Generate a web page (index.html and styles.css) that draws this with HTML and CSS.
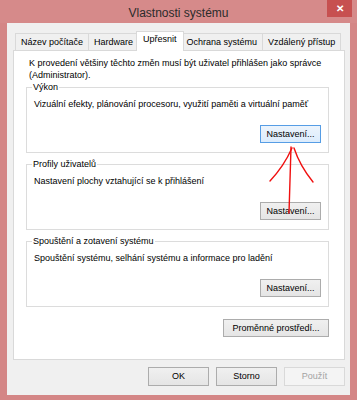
FILE: index.html
```html
<!DOCTYPE html>
<html lang="cs">
<head>
    <meta charset="UTF-8">
    <meta name="viewport" content="width=device-width, initial-scale=1.0">
    <title>Vlastnosti systému</title>
    <link rel="stylesheet" href="styles.css">
</head>
<body>
    <div class="window">
        <div class="titlebar">
            <span></span>
            <span class="title">Vlastnosti systému</span>
            <button class="close">&#x2715;</button>
        </div>

        <div class="client">
            <div class="tabs">
                <div class="tab">Název počítače</div>
                <div class="tab">Hardware</div>
                <div class="tab active">Upřesnit</div>
                <div class="tab">Ochrana systému</div>
                <div class="tab">Vzdálený přístup</div>
            </div>

            <div class="panel">
                <p class="intro">K provedení většiny těchto změn musí být uživatel přihlášen jako správce<br>(Administrator).</p>

                <fieldset class="group">
                    <legend>Výkon</legend>
                    <p>Vizuální efekty, plánování procesoru, využití paměti a virtuální paměť</p>
                    <div class="row">
                        <button class="btn focus">Nastavení...</button>
                    </div>
                </fieldset>

                <fieldset class="group">
                    <legend>Profily uživatelů</legend>
                    <p>Nastavení plochy vztahující se k přihlášení</p>
                    <div class="row">
                        <button class="btn">Nastavení...</button>
                    </div>
                </fieldset>

                <fieldset class="group">
                    <legend>Spouštění a zotavení systému</legend>
                    <p>Spouštění systému, selhání systému a informace pro ladění</p>
                    <div class="row">
                        <button class="btn">Nastavení...</button>
                    </div>
                </fieldset>

                <div class="row env">
                    <button class="btn wide">Proměnné prostředí...</button>
                </div>
            </div>

            <div class="actions">
                <button class="btn">OK</button>
                <button class="btn">Storno</button>
                <button class="btn" disabled>Použít</button>
            </div>
        </div>

        <!-- hand drawn arrow on top of the dialog -->
        <svg class="arrow" width="357" height="400" viewBox="0 0 357 400">
            <path d="M291 147 L289 213" />
            <path d="M292 148 Q284 166 270 181" />
            <path d="M294 148 Q300 166 313 182" />
        </svg>
    </div>
</body>
</html>
```

FILE: styles.css
```css
*{
    margin: 0;
    padding: 0;
    box-sizing: border-box;
    font-family: "Liberation Sans", Arial, sans-serif;
}

body{
    width: 357px;
    height: 400px;
    background-color: #d48686;
}

.window{
    position: relative;
    width: 357px;
    height: 400px;
    background-color: #d48686;
    display: flex;
    flex-direction: column;
}

.titlebar{
    height: 23px;
    display: grid;
    grid-template-columns: 1fr auto 1fr;
    align-items: start;
    background-color: #d68a8a;
}

.titlebar .title{
    font-size: 12px;
    line-height: 26px;
    color: #2b2b2b;
}

.titlebar .close{
    justify-self: end;
    width: 25px;
    height: 17px;
    margin-right: 5px;
    border: none;
    background-color: #c75050;
    color: white;
    font-size: 10px;
    font-weight: bold;
    line-height: 17px;
}

.client{
    flex: 1;
    margin: 0 7px 5px 7px;
    padding: 8px 5px 9px 6px;
    background-color: #f0f0f0;
    display: flex;
    flex-direction: column;
    font-size: 9px;
    color: #000;
}

.tabs{
    height: 19px;
    padding-left: 2px;
    display: flex;
    align-items: flex-end;
}

.tab{
    position: relative;
    height: 17px;
    padding: 0 5px;
    margin-left: -1px;
    border: 1px solid #d9d9d9;
    border-bottom: none;
    background-color: #f0f0f0;
    line-height: 16px;
    white-space: nowrap;
}

.tab:first-child{
    margin-left: 0;
}

.tab.active{
    z-index: 2;
    height: 20px;
    margin: 0 -2px -1px -3px;
    padding: 0 6px;
    background-color: #fff;
    line-height: 15px;
}

.panel{
    position: relative;
    z-index: 1;
    height: 310px;
    padding: 6px 15px 0 12px;
    background-color: #fff;
    border: 1px solid #d9d9d9;
}

.panel p{
    line-height: 12px;
}

.panel .intro{
    padding-left: 3px;
}

.group{
    margin-top: 5px;
    padding: 0 7px 9px 7px;
    border: 1px solid #dcdcdc;
}

.group:first-of-type{
    margin-top: 0;
}

.group legend{
    margin-left: -2px;
    padding: 0 1px;
    line-height: 12px;
}

.group p{
    margin-top: 5px;
}

.row{
    display: flex;
    justify-content: flex-end;
}

.group .row{
    margin-top: 15px;
}

.btn{
    width: 61px;
    height: 18px;
    border: 1px solid #acacac;
    background: linear-gradient(#f0f0f0, #e5e5e5);
    font-size: 9px;
    color: #000;
    line-height: 15px;
}

.btn.focus{
    border-color: #569de5;
    background: linear-gradient(#ecf4fc, #dcecfc);
}

.btn.wide{
    width: 106px;
}

.env{
    margin-top: 12px;
}

.btn:disabled{
    border-color: #d9d9d9;
    background: #f4f4f4;
    color: #a3a3a3;
}

.actions{
    margin-top: 7px;
    display: flex;
    justify-content: flex-end;
    gap: 7px;
}

.actions .btn{
    height: 19px;
}

.arrow{
    position: absolute;
    left: 0;
    top: 0;
    z-index: 5;
    pointer-events: none;
}

.arrow path{
    fill: none;
    stroke: #f01010;
    stroke-width: 1.4;
    stroke-linecap: round;
}
```
